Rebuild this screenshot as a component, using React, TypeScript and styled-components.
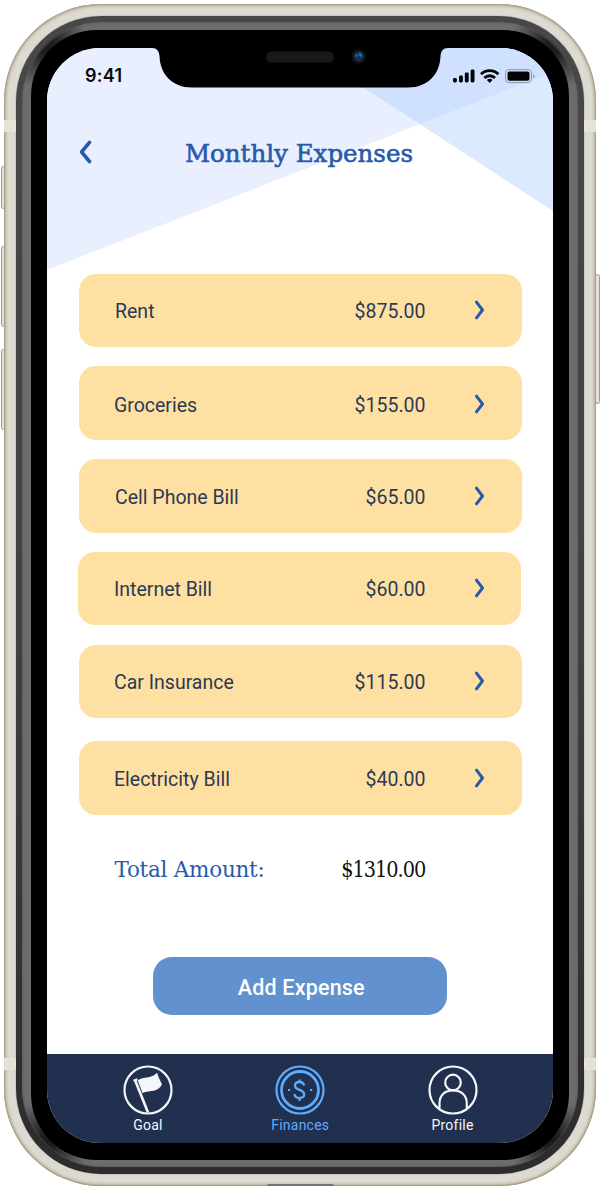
import React from "react";
import styled, { createGlobalStyle } from "styled-components";

const color = {
  navy: "#22304f",
  ink: "#2c3952",
  blue: "#275aab",
  sky: "#5cadff",
  sand: "#ffe0a3",
  button: "#6191ce",
};

const GlobalStyle = createGlobalStyle`
  * { box-sizing: border-box; }
  body { margin: 0; background: #fff; font-family: Roboto, "Liberation Sans", sans-serif; }
`;

const Page = styled.div`
  position: relative;
  width: 600px;
  height: 1190px;
  padding: 4px 4px 4px 3.5px;
  overflow: hidden;
`;

const Shell = styled.div`
  position: relative;
  height: 1182px;
  padding: 12px 12px 12px 12.5px;
  border-radius: 97px;
  background: #dddad1;
  box-shadow: inset 0 0 0 1px #aaa189, inset 0 0 3px 2px #b3aa94;
`;

const Rim = styled.div`
  height: 100%;
  padding: 6px 6.5px 7px 6px;
  border-radius: 85px;
  background: linear-gradient(#484848, #424242 50%, #2c2c2c);
  box-shadow: 0 0 0 0.5px #b5b5b3;
`;

const Bevel = styled.div`
  height: 100%;
  padding: 8px 8.5px 7px 8.5px;
  border-radius: 79px;
  background:
    radial-gradient(circle at 22px 22px, #1c1c1c 8px, transparent 44px),
    radial-gradient(circle at calc(100% - 22px) 22px, #1c1c1c 8px, transparent 44px),
    radial-gradient(circle at 22px calc(100% - 22px), #1c1c1c 8px, transparent 44px),
    radial-gradient(circle at calc(100% - 22px) calc(100% - 22px), #1c1c1c 8px, transparent 44px),
    #6c6c6c;
  box-shadow: inset 0 0 2px 0.5px #585858;
`;

const Bezel = styled.div`
  height: 100%;
  padding: 18px 16.3px 17.5px 16.5px;
  border-radius: 66px;
  background: #000;
`;

const Screen = styled.main`
  position: relative;
  display: flex;
  flex-direction: column;
  height: 100%;
  border-radius: 53px;
  background: #fff;
  overflow: hidden;
`;

const Backdrop = styled.svg`
  position: absolute;
  top: 0;
  left: 0;
`;

const SideKey = styled.div<{ $side: "left" | "right"; $top: number; $height: number }>`
  position: absolute;
  ${(p) => p.$side}: ${(p) => (p.$side === "left" ? 1 : 0)}px;
  top: ${(p) => p.$top}px;
  width: 5px;
  height: ${(p) => p.$height}px;
  border: 1px solid #a29c86;
  border-radius: 3px;
  background: #e3e1d6;
`;

const Antenna = styled.div<{ $side: "left" | "right"; $top: number }>`
  position: absolute;
  ${(p) => p.$side}: 0;
  top: ${(p) => p.$top}px;
  width: 12px;
  height: 12px;
  background: #e6e2d8;
`;

const Port = styled.div`
  position: absolute;
  left: 263px;
  bottom: 0;
  width: 67px;
  height: 2px;
  border-radius: 3px 3px 0 0;
  background: #79756a;
`;

const StatusBar = styled.div`
  position: relative;
  display: flex;
  align-items: center;
  justify-content: space-between;
  height: 54px;
  padding: 1px 17px 0 38px;
`;

const Clock = styled.span`
  font: 600 18px/22px Inter, sans-serif;
  letter-spacing: 0.3px;
  color: #0b0b0d;
`;

const Header = styled.header`
  position: relative;
  display: flex;
  align-items: center;
  height: 100px;
  padding-left: 32px;
`;

const Title = styled.h1`
  margin: 3px 0 0 92px;
  font: 400 24.5px/32px "Roboto Slab", "DejaVu Serif", serif;
  letter-spacing: 0;
  white-space: nowrap;
  color: ${color.blue};
  -webkit-text-stroke: 0.6px ${color.blue};
`;

const List = styled.ul`
  position: relative;
  display: flex;
  flex-direction: column;
  margin: 71.5px 0 0;
  padding: 0 30.7px 0 32px;
  list-style: none;
`;

const Row = styled.li<{ $gap: number; $shift: number; $indent: number; $drop: number }>`
  display: grid;
  grid-template-columns: 1fr auto 49.5px 10px;
  align-items: center;
  height: 73.5px;
  margin: ${(p) => p.$gap}px ${(p) => p.$shift}px 0 ${(p) => -p.$shift}px;
  padding: ${(p) => 3.4 + p.$drop}px ${(p) => 37 - p.$shift}px 0 ${(p) => p.$indent + p.$shift}px;
  border-radius: 17px;
  background: ${color.sand};
  font-size: 19.5px;
  line-height: 24px;
  color: ${color.ink};
`;

const Amount = styled.span`
  letter-spacing: 0;
`;

const Arrow = styled.svg`
  grid-column: 4;
  margin-top: -4px;
`;

const Total = styled.div`
  position: relative;
  display: flex;
  justify-content: space-between;
  margin-top: 40px;
  padding: 0 127.5px 0 67.5px;
  font: 400 21.5px/30px "Roboto Slab", "DejaVu Serif", serif;
  letter-spacing: -0.25px;
  color: ${color.blue};
`;

const TotalValue = styled.span`
  font-family: "Roboto Slab", "DejaVu Serif Condensed", "DejaVu Serif", serif;
  font-stretch: condensed;
  letter-spacing: -1.05px;
  color: #111;
`;

const AddButton = styled.button`
  width: 293.5px;
  height: 58.5px;
  margin: 72px 0 0 106px;
  padding: 3px 3px 0 6px;
  border: 0;
  border-radius: 19px;
  background: ${color.button};
  font: 500 21.5px/26px Roboto, sans-serif;
  letter-spacing: 0.2px;
  color: #fff;
`;

const TabBar = styled.nav`
  display: grid;
  grid-template-columns: repeat(3, 152.3px);
  height: 88.5px;
  margin-top: auto;
  padding: 11px 0 0 24.8px;
  background: ${color.navy};
`;

const Tab = styled.a<{ $active?: boolean }>`
  display: flex;
  flex-direction: column;
  align-items: center;
  font-size: 14px;
  line-height: 16px;
  letter-spacing: 0.25px;
  color: ${(p) => (p.$active ? color.sky : "#f4f6fa")};
`;

const TabIcon = styled.svg`
  width: 50px;
  height: 50px;
  margin-bottom: 2px;
  fill: none;
  stroke: currentColor;
  stroke-width: 2.2;
`;

const expenses = [
  { name: "Rent", amount: "$875.00", gap: 0, shift: 0, indent: 36, drop: 0 },
  { name: "Groceries", amount: "$155.00", gap: 19, shift: 0, indent: 35, drop: 3.2 },
  { name: "Cell Phone Bill", amount: "$65.00", gap: 19.5, shift: 0, indent: 36, drop: 0.8 },
  { name: "Internet Bill", amount: "$60.00", gap: 19, shift: 1.3, indent: 35, drop: 0.5 },
  { name: "Car Insurance", amount: "$115.00", gap: 19.5, shift: 0, indent: 35, drop: 0 },
  { name: "Electricity Bill", amount: "$40.00", gap: 23.3, shift: 0, indent: 35, drop: 0 },
];

function Wallpaper() {
  return (
    <Backdrop width="506" height="230" viewBox="0 0 506 230">
      <path d="M0 0H506V24L0 222Z" fill="#eaefff" />
      <path d="M256 0H506V163Z" fill="#dbeaff" />
      <path d="M256 0H506V24L373 76Z" fill="#cfe1ff" />
      <path
        d="M105 0C110 0 112 3 112.500 8C113 26 125 39.500 145 39.500H361C381 39.500 393 26 393.500 8C394 3 396 0 401 0Z"
        fill="#000"
      />
      <rect x="219" y="3.500" width="68" height="11" rx="5.500" fill="#191919" />
      <circle cx="311.700" cy="8.500" r="7.300" fill="#131314" />
      <circle cx="311.700" cy="8.500" r="4.700" fill="#153057" />
      <path d="M312 4.500a4 4 0 0 1 3.800 4.500l-3.800-1Z" fill="#2a66aa" />
      <circle cx="309.700" cy="7.500" r="1.400" fill="#2b5c92" />
    </Backdrop>
  );
}

function StatusIcons() {
  return (
    <svg width="84" height="16" viewBox="0 0 84 16" fill="#050505">
      <rect x="1" y="10" width="3.900" height="4.500" rx="1.400" />
      <rect x="7" y="7.500" width="3.900" height="7" rx="1.400" />
      <rect x="12.800" y="4.500" width="3.900" height="10" rx="1.400" />
      <rect x="18.600" y="1.500" width="3.900" height="13" rx="1.400" />
      <g fill="none" stroke="#050505" strokeWidth="2.900">
        <path d="M29 6.200a12.400 12.400 0 0 1 17.400 0" />
        <path d="M32.400 10a7.500 7.500 0 0 1 10.600 0" />
      </g>
      <path d="M34.900 12a3.900 3.900 0 0 1 5.600 0L37.700 14.900Z" />
      <rect x="53.500" y="1.600" width="26" height="13" rx="3.500" fill="none" stroke="#8b97ad" />
      <rect x="55.500" y="3.500" width="22" height="9.200" rx="2" />
      <path d="M81 6.200c2 .6 2 3.300 0 4Z" fill="#8b97ad" />
    </svg>
  );
}

export default function App() {
  return (
    <>
      <GlobalStyle />
      <Page>
        <SideKey $side="left" $top={166} $height={43} />
        <SideKey $side="left" $top={246} $height={81} />
        <SideKey $side="left" $top={349} $height={81} />
        <SideKey $side="right" $top={274} $height={130} />
        <Shell>
          <Antenna $side="left" $top={116} />
          <Antenna $side="right" $top={116} />
          <Antenna $side="left" $top={1054} />
          <Antenna $side="right" $top={1054} />
          <Port />
          <Rim>
            <Bevel>
              <Bezel>
                <Screen>
                  <Wallpaper />
                  <StatusBar>
                    <Clock>9:41</Clock>
                    <StatusIcons />
                  </StatusBar>
                  <Header>
                    <svg width="14" height="24" viewBox="0 0 14 24" fill="none" stroke={color.blue} strokeWidth="3.600" strokeLinecap="round" strokeLinejoin="round">
                      <path d="M10.500 2.300L2.600 12L10.500 21.500" />
                    </svg>
                    <Title>Monthly Expenses</Title>
                  </Header>
                  <List>
                    {expenses.map((e) => (
                      <Row key={e.name} $gap={e.gap} $shift={e.shift} $indent={e.indent} $drop={e.drop}>
                        <span>{e.name}</span>
                        <Amount>{e.amount}</Amount>
                        <Arrow width="10" height="20" viewBox="0 0 10 20" fill="none" stroke={color.blue} strokeWidth="3" strokeLinecap="round" strokeLinejoin="round">
                          <path d="M1.500 2.200L7.500 10L1.500 17.800" />
                        </Arrow>
                      </Row>
                    ))}
                  </List>
                  <Total>
                    <span>Total Amount:</span>
                    <TotalValue>$1310.00</TotalValue>
                  </Total>
                  <AddButton>Add Expense</AddButton>
                  <TabBar>
                    <Tab>
                      <TabIcon viewBox="0 0 50 50">
                        <circle cx="25" cy="25" r="23.500" />
                        <path d="M12 15L25 47.500" strokeWidth="2.600" />
                        <path d="M10.500 15.800L14.500 14.200" />
                        <path d="M14.800 15.500C21 10.500 27 15 34 7.800L35.800 12.500L39 19.500C34 28 28 24.500 19.500 28Z" fill="currentColor" stroke="none" />
                      </TabIcon>
                      Goal
                    </Tab>
                    <Tab $active>
                      <TabIcon viewBox="0 0 50 50">
                        <circle cx="25" cy="25" r="23.500" />
                        <circle cx="25" cy="25" r="18.500" strokeWidth="2.800" />
                        <path d="M29 20.500C28.500 15.800 20 15.800 20 20.500C20 26 29.200 23.800 29.200 29.500C29.200 34.200 19.800 34.200 19.500 29M24.600 14.500V18M24.600 32.500V36" strokeWidth="2.300" />
                        <path d="M13 25h2.200M35 25h2.200" />
                      </TabIcon>
                      Finances
                    </Tab>
                    <Tab>
                      <TabIcon viewBox="0 0 50 50">
                        <circle cx="25" cy="25" r="23.500" />
                        <circle cx="25" cy="17.500" r="7.800" />
                        <path d="M11.500 43.500V38.500C11.500 30 17 25.300 25 25.300S38.800 30 38.800 38.500V43.500" />
                      </TabIcon>
                      Profile
                    </Tab>
                  </TabBar>
                </Screen>
              </Bezel>
            </Bevel>
          </Rim>
        </Shell>
      </Page>
    </>
  );
}
